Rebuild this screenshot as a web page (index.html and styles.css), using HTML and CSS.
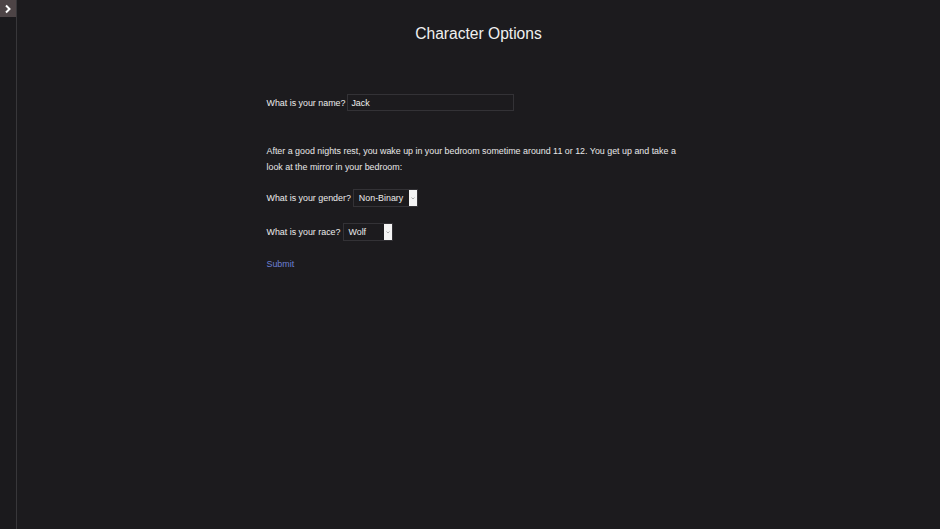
FILE: index.html
```html
<!DOCTYPE html>
<html>
<head>
<meta charset="utf-8">
<link rel="stylesheet" href="styles.css">
</head>
<body>
<div class="app">
  <aside class="sidebar">
    <button class="toggle" aria-label="Open sidebar">
      <svg width="8" height="10" viewBox="0 0 8 10"><path d="M2 1.5 L5.5 5 L2 8.5" fill="none" stroke="#fff" stroke-width="2"/></svg>
    </button>
  </aside>
  <main class="main">
    <h1 class="title">Character Options</h1>
    <form class="form">
      <div class="row row-name">
        <label>What is your name?</label>
        <input class="text-input" type="text" value="Jack">
      </div>
      <p class="story">After a good nights rest, you wake up in your bedroom sometime around 11 or 12. You get up and take a look at the mirror in your bedroom:</p>
      <div class="row row-gender">
        <label>What is your gender?</label>
        <span class="select select-gender"><span class="select-value">Non-Binary</span><span class="select-arrow"><svg width="4" height="3" viewBox="0 0 4 3"><path d="M0.5 0.5 L2 2 L3.5 0.5" fill="none" stroke="#999" stroke-width="0.8"/></svg></span></span>
      </div>
      <div class="row row-race">
        <label>What is your race?</label>
        <span class="select select-race"><span class="select-value">Wolf</span><span class="select-arrow"><svg width="4" height="3" viewBox="0 0 4 3"><path d="M0.5 0.5 L2 2 L3.5 0.5" fill="none" stroke="#999" stroke-width="0.8"/></svg></span></span>
      </div>
      <a class="submit" href="#">Submit</a>
    </form>
  </main>
</div>
</body>
</html>
```
FILE: styles.css
```css
html, body {
  margin: 0;
  height: 100%;
  background: #1c1b1e;
  font-family: "Liberation Sans", Arial, sans-serif;
  color: #e4e4e4;
}
.app {
  display: flex;
  height: 100%;
}
.sidebar {
  width: 16px;
  flex: none;
  border-right: 1px solid #38373a;
  background: #1b1a1d;
}
.toggle {
  display: flex;
  align-items: center;
  justify-content: center;
  width: 16px;
  height: 17px;
  padding: 0;
  border: none;
  background: #4d4446;
}
.main {
  flex: 1;
  display: flex;
  flex-direction: column;
  align-items: center;
}
.title {
  margin: 24px 0 0;
  font-size: 15.6px;
  font-weight: normal;
  line-height: 19px;
  color: #f0f0f0;
}
.form {
  width: 424px;
  margin-top: 51px;
  display: flex;
  flex-direction: column;
  font-size: 8.9px;
}
.row {
  display: flex;
  align-items: center;
  gap: 2px;
}
.row label {
  color: #ececec;
}
.text-input {
  width: 167px;
  height: 17px;
  box-sizing: border-box;
  padding: 0 3px;
  border: 1px solid #333236;
  background: #1c1b1e;
  color: #f0f0f0;
  font: inherit;
  outline: none;
}
.story {
  margin: 32px 0 0;
  line-height: 16px;
  color: #e8e8e8;
}
.row-gender {
  margin-top: 14px;
}
.row-race {
  margin-top: 16px;
}
.select {
  position: relative;
  display: inline-flex;
  align-items: center;
  height: 18px;
  border: 1px solid #333236;
  background: #1c1b1e;
  box-sizing: border-box;
  padding-left: 5px;
}
.select-gender { width: 65px; }
.select-race { width: 50px; }
.select-value {
  color: #ececec;
}
.select-arrow {
  position: absolute;
  right: 0;
  top: 0;
  bottom: 0;
  width: 8px;
  background: #f4f4f4;
  display: flex;
  align-items: center;
  justify-content: center;
}
.submit {
  margin-top: 18px;
  color: #6c80d4;
  text-decoration: none;
  align-self: flex-start;
}
```
